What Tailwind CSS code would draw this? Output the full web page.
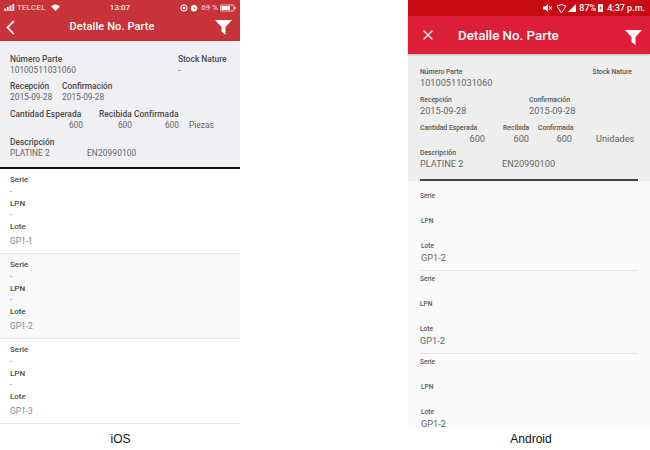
<!DOCTYPE html>
<html>
<head>
<meta charset="utf-8">
<script src="https://cdn.jsdelivr.net/npm/@tailwindcss/browser@4"></script>
</head>
<body class="bg-white">
<div class="flex w-[650px] h-[450px] overflow-hidden bg-white font-['Roboto',sans-serif]">
  <!-- iOS -->
  <div class="w-[240px] flex flex-col shrink-0">
    <div class="h-[41px] bg-[#c8333a] text-white relative shrink-0">
      <div class="h-[14px] pt-[1px] flex items-center justify-between pl-[4px] pr-[4px] text-[8px] leading-none text-white/85">
        <div class="flex items-center gap-[2px] w-[80px]">
          <svg width="11" height="7" viewBox="0 0 11 7"><rect x="0" y="4.5" width="1.8" height="2.5" fill="#fff"/><rect x="2.8" y="3" width="1.8" height="4" fill="#fff"/><rect x="5.6" y="1.5" width="1.8" height="5.5" fill="#fff"/><rect x="8.4" y="0" width="1.8" height="7" fill="#fff"/></svg>
          <span class="tracking-[0.2px]">TELCEL</span>
          <svg class="ml-[3px]" width="9" height="7" viewBox="0 0 9 7"><path d="M0 2.2 Q4.5 -1.4 9 2.2 L4.5 7Z" fill="#fff"/></svg>
        </div>
        <span class="text-[8px] font-medium text-white/90">13:07</span>
        <div class="flex items-center justify-end gap-[2px] w-[80px]">
          <svg width="8" height="8" viewBox="0 0 8 8"><circle cx="4" cy="4" r="3.2" fill="none" stroke="#fff" stroke-width="1"/><circle cx="4" cy="4" r="1.4" fill="#fff"/></svg>
          <svg width="8" height="8" viewBox="0 0 8 8"><circle cx="4" cy="4.3" r="3.2" fill="#fff"/><path d="M4 2.5V4.5H5.5" stroke="#c8333a" stroke-width=".7" fill="none"/></svg>
          <span class="ml-[1px]">69 %</span>
          <svg width="16" height="8" viewBox="0 0 16 8"><rect x=".5" y="1" width="13.5" height="6" rx="1" fill="none" stroke="#fff" stroke-width=".7"/><rect x="1.5" y="2" width="8.5" height="4" fill="#fff"/><rect x="14.5" y="3" width="1" height="2" fill="#fff"/></svg>
        </div>
      </div>
      <div class="h-[27px] flex items-center justify-between pl-[6px] pr-[8px]">
        <svg width="9" height="15" viewBox="0 0 9 15"><path d="M7.8 1 L1.6 7.5 L7.8 14" fill="none" stroke="#fff" stroke-width="1.8"/></svg>
        <span class="text-[11px] font-medium tracking-[0.1px] mr-[6px]">Detalle No. Parte</span>
        <svg width="17" height="15" viewBox="0 0 17 15"><path d="M0 0H17L10.5 7V15L6.5 11.5V7Z" fill="#fff"/></svg>
      </div>
    </div>
    <div class="h-[126px] bg-[#efeff4] px-[10px] pt-[13px] text-[8.4px] leading-[11px] text-[#666] shrink-0">
      <div class="flex h-[27px]">
        <div class="w-[168px]"><div class="font-medium text-[#4a4a4a]">Número Parte</div><div>10100511031060</div></div>
        <div><div class="font-medium text-[#4a4a4a]">Stock Nature</div><div>-</div></div>
      </div>
      <div class="flex h-[28px] gap-[4px]">
        <div class="w-[48px]"><div class="font-medium text-[#4a4a4a]">Recepción</div><div>2015-09-28</div></div>
        <div><div class="font-medium text-[#4a4a4a]">Confirmación</div><div>2015-09-28</div></div>
      </div>
      <div class="h-[28px]">
        <div class="flex font-medium text-[#4a4a4a] tracking-[0.05px]"><span class="w-[89px]">Cantidad Esperada</span><span class="w-[35px]">Recibida</span><span>Confirmada</span></div>
        <div class="flex"><span class="w-[73px] text-right">600</span><span class="w-[49px] text-right">600</span><span class="w-[47px] text-right">600</span><span class="ml-[10px]">Piezas</span></div>
      </div>
      <div>
        <div class="font-medium text-[#4a4a4a]">Descripción</div>
        <div class="flex"><span class="w-[77px]">PLATINE 2</span><span class="tracking-[0.1px]">EN20990100</span></div>
      </div>
    </div>
    <div class="h-[2px] bg-[#111] shrink-0"></div>
    <div class="flex flex-col text-[8px] leading-[11px] text-[#888]">
      <div class="h-[85px] border-b border-[#e3e3e3] pl-[10px] pt-[5px] flex flex-col bg-white">
        <div class="font-medium text-[#4a4a4a] h-[12px]">Serie</div><div class="h-[12px]">-</div>
        <div class="font-medium text-[#4a4a4a] h-[11px]">LPN</div><div class="h-[12px]">-</div>
        <div class="font-medium text-[#4a4a4a] h-[15px]">Lote</div><div class="text-[8.4px]">GP1-1</div>
      </div>
      <div class="h-[85px] border-b border-[#e3e3e3] pl-[10px] pt-[5px] flex flex-col bg-[#f9f9f9]">
        <div class="font-medium text-[#4a4a4a] h-[12px]">Serie</div><div class="h-[12px]">-</div>
        <div class="font-medium text-[#4a4a4a] h-[11px]">LPN</div><div class="h-[12px]">-</div>
        <div class="font-medium text-[#4a4a4a] h-[15px]">Lote</div><div class="text-[8.4px]">GP1-2</div>
      </div>
      <div class="h-[85px] border-b border-[#e3e3e3] pl-[10px] pt-[5px] flex flex-col bg-white">
        <div class="font-medium text-[#4a4a4a] h-[12px]">Serie</div><div class="h-[12px]">-</div>
        <div class="font-medium text-[#4a4a4a] h-[11px]">LPN</div><div class="h-[12px]">-</div>
        <div class="font-medium text-[#4a4a4a] h-[15px]">Lote</div><div class="text-[8.4px]">GP1-3</div>
      </div>
    </div>
    <div class="text-center text-[12px] leading-[14px] mt-[8px] pl-[1px] text-[#111] font-['Liberation_Sans',sans-serif]">iOS</div>
  </div>
  <div class="w-[168px] shrink-0"></div>
  <!-- Android -->
  <div class="w-[242px] flex flex-col shrink-0">
    <div class="h-[16px] bg-[#c70a14] text-white flex items-center justify-end gap-[2px] pr-[5px] text-[9px] font-medium leading-none shrink-0">
      <svg width="9" height="8" viewBox="0 0 9 8"><path d="M0 2.5H2L5 0V8L2 5.5H0Z" fill="#fff"/><path d="M6 2L9 6M9 2L6 6" stroke="#fff" stroke-width="1"/></svg>
      <svg class="ml-[3px]" width="9" height="9" viewBox="0 0 9 9"><path d="M0 2 Q4.5 -1 9 2 L4.5 9Z" fill="none" stroke="#fff" stroke-width="1"/></svg>
      <svg width="8" height="8" viewBox="0 0 8 8"><path d="M0 8L8 0V8Z" fill="#fff"/></svg>
      <span class="ml-[1px]">87%</span>
      <svg width="5" height="8" viewBox="0 0 5 8"><rect width="5" height="8" rx=".6" fill="#fff"/><path d="M2.8 1.5L1.3 4.4H2.4L2.1 6.5L3.7 3.5H2.6Z" fill="#c70a14"/></svg>
      <span class="ml-[2px]">4:37 p.m.</span>
    </div>
    <div class="h-[38px] bg-[#dc1f36] text-white flex items-center pl-[15px] pr-[8px] relative z-10 shadow-[0_1px_2px_rgba(0,0,0,0.25)] shrink-0">
      <svg width="10" height="10" viewBox="0 0 10 10"><path d="M.7 .7L9.3 9.3M9.3 .7L.7 9.3" stroke="#fff" stroke-width="1.3"/></svg>
      <span class="ml-[25px] mt-[1px] text-[13.3px] font-medium">Detalle No. Parte</span>
      <svg class="ml-auto mt-[4px]" width="17" height="15" viewBox="0 0 17 15"><path d="M0 0H17L10.5 7V15L6.5 12V7Z" fill="#fff"/></svg>
    </div>
    <div class="h-[127px] bg-[#eeeeee] px-[12px] pt-[14px] text-[9.2px] leading-[12px] text-[#666] shrink-0">
      <div class="flex h-[28px] justify-between">
        <div><div class="text-[6.8px] leading-[9px] font-medium text-[#555]">Número Parte</div><div>10100511031060</div></div>
        <div class="mr-[6px]"><div class="text-[6.8px] leading-[9px] font-medium text-[#555]">Stock Nature</div></div>
      </div>
      <div class="flex h-[28px]">
        <div class="w-[109px]"><div class="text-[6.8px] leading-[9px] font-medium text-[#555]">Recepción</div><div>2015-09-28</div></div>
        <div><div class="text-[6.8px] leading-[9px] font-medium text-[#555]">Confirmación</div><div>2015-09-28</div></div>
      </div>
      <div class="h-[25px]">
        <div class="flex text-[6.8px] leading-[9px] font-medium text-[#555]"><span class="w-[83px]">Cantidad Esperada</span><span class="w-[35px]">Recibida</span><span>Confirmada</span></div>
        <div class="flex"><span class="w-[65px] text-right">600</span><span class="w-[44px] text-right">600</span><span class="w-[43px] text-right">600</span><span class="ml-[24px]">Unidades</span></div>
      </div>
      <div>
        <div class="text-[6.8px] leading-[9px] font-medium text-[#555]">Descripción</div>
        <div class="flex"><span class="w-[82px]">PLATINE 2</span><span>EN20990100</span></div>
      </div>
      <div class="h-[2px] bg-[#444] mt-[9px]"></div>
    </div>
    <div class="h-[246px] overflow-hidden bg-[#fafafa] px-[12px] text-[9.2px] leading-[12px] text-[#666]">
      <div class="h-[90px] border-b border-[#e2e2e2] pt-[11px]">
        <div class="h-[25px] text-[6.6px] leading-[9px] font-medium text-[#555]">Serie</div>
        <div class="h-[25px] pl-[1px] text-[6.6px] leading-[9px] font-medium text-[#555]">LPN</div>
        <div class="pl-[1px]"><div class="text-[6.6px] leading-[9px] font-medium text-[#555]">Lote</div><div class="mt-[1px]">GP1-2</div></div>
      </div>
      <div class="h-[83px] border-b border-[#e2e2e2] pt-[4px]">
        <div class="h-[25px] text-[6.6px] leading-[9px] font-medium text-[#555]">Serie</div>
        <div class="h-[25px] text-[6.6px] leading-[9px] font-medium text-[#555]">LPN</div>
        <div><div class="text-[6.6px] leading-[9px] font-medium text-[#555]">Lote</div><div class="mt-[1px]">GP1-2</div></div>
      </div>
      <div class="h-[73px] pt-[4px]">
        <div class="h-[25px] text-[6.6px] leading-[9px] font-medium text-[#555]">Serie</div>
        <div class="h-[25px] pl-[1px] text-[6.6px] leading-[9px] font-medium text-[#555]">LPN</div>
        <div class="pl-[1px]"><div class="text-[6.6px] leading-[9px] font-medium text-[#555]">Lote</div><div class="mt-[3px] leading-[7px]">GP1-2</div></div>
      </div>
    </div>
    <div class="text-center text-[12px] leading-[14px] mt-[5px] text-[#111] font-['Liberation_Sans',sans-serif] w-[246px]">Android</div>
  </div>
</div>
</body>
</html>
